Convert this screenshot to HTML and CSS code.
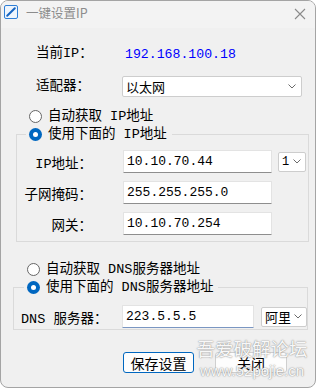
FILE: index.html
```html
<!DOCTYPE html>
<html lang="zh-CN">
<head>
<meta charset="utf-8">
<title>一键设置IP</title>
<link rel="stylesheet" href="styles.css">
</head>
<body>
<div class="window">
  <div class="titlebar">
    <svg class="app-icon" width="14" height="14" viewBox="0 0 14 14">
      <rect x="0.5" y="0.5" width="13" height="13" rx="1.5" fill="#eef5fd" stroke="#2f7fd6"/>
      <line x1="3.2" y1="10.8" x2="10.8" y2="3.2" stroke="#1665c1" stroke-width="2" stroke-linecap="round"/>
    </svg>
    <span class="title">一键设置IP</span>
    <svg class="close" width="12" height="12" viewBox="0 0 12 12">
      <path d="M1 1 L11 11 M11 1 L1 11" stroke="#8a8a8a" stroke-width="1.1" fill="none"/>
    </svg>
  </div>

  <div class="client">
    <div class="row-ip">
      <span class="lbl lbl-ip">当前IP：</span>
      <span class="ip-value">192.168.100.18</span>
    </div>

    <div class="row-adapter">
      <span class="lbl lbl-adapter">适配器：</span>
      <div class="combo combo-adapter">
        <span class="combo-text">以太网</span>
        <svg class="chev" width="8" height="5" viewBox="0 0 8 5"><path d="M0.5 0.5 L4 4 L7.5 0.5" stroke="#6b6b6b" fill="none"/></svg>
      </div>
    </div>

    <div class="radio-row radio-ip">
      <span class="radio"></span>
      <span class="rtext">自动获取 IP地址</span>
    </div>

    <fieldset class="group group-ip">
      <legend class="legend legend-ip">
        <span class="radio checked"></span>
        <span class="rtext">使用下面的 IP地址</span>
      </legend>
      <div class="frows">
        <div class="frow">
          <span class="flbl">IP地址：</span>
          <input class="tb" type="text" value="10.10.70.44">
          <div class="combo combo-small">
            <span class="combo-text mono">1</span>
            <svg class="chev" width="8" height="5" viewBox="0 0 8 5"><path d="M0.5 0.5 L4 4 L7.5 0.5" stroke="#6b6b6b" fill="none"/></svg>
          </div>
        </div>
        <div class="frow">
          <span class="flbl">子网掩码：</span>
          <input class="tb" type="text" value="255.255.255.0">
        </div>
        <div class="frow">
          <span class="flbl">网关：</span>
          <input class="tb" type="text" value="10.10.70.254">
        </div>
      </div>
    </fieldset>

    <div class="radio-row radio-dns">
      <span class="radio"></span>
      <span class="rtext">自动获取 DNS服务器地址</span>
    </div>

    <fieldset class="group group-dns">
      <legend class="legend legend-dns">
        <span class="radio checked"></span>
        <span class="rtext">使用下面的 DNS服务器地址</span>
      </legend>
      <div class="frow dns-row">
        <span class="dlbl">DNS 服务器：</span>
        <input class="tb tb-dns" type="text" value="223.5.5.5">
        <div class="combo combo-dns">
          <span class="combo-text">阿里</span>
          <svg class="chev" width="8" height="5" viewBox="0 0 8 5"><path d="M0.5 0.5 L4 4 L7.5 0.5" stroke="#6b6b6b" fill="none"/></svg>
        </div>
      </div>
    </fieldset>

    <div class="buttons">
      <button class="btn btn-primary" type="button">保存设置</button>
      <button class="btn" type="button">关闭</button>
    </div>
  </div>

  <div class="watermark">
    <div class="wm-cn">吾爱破解论坛</div>
    <div class="wm-url">www.52pojie.cn</div>
  </div>
</div>
</body>
</html>
```

FILE: styles.css
```css
* { box-sizing: border-box; }

html, body {
  margin: 0;
  padding: 0;
  background: #ffffff;
}

body {
  font-family: "Liberation Mono", "Noto Sans CJK SC", monospace;
  font-size: 13px;
  color: #000;
}

.window {
  position: relative;
  width: 316px;
  height: 388px;
  border: 1px solid #a4a4a4;
  border-radius: 8px;
  background: #f0f0f0;
  overflow: hidden;
}

.titlebar {
  height: 27px;
  background: #f3f3f3;
  display: flex;
  align-items: flex-start;
  padding: 4px 0 0 3px;
}

.app-icon { display: block; flex: none; }

.title {
  margin-left: 8px;
  font-family: "Noto Sans CJK SC", sans-serif;
  font-size: 12.5px;
  line-height: 16px;
  color: #8c8c8c;
}

.close {
  margin-left: auto;
  margin-right: 9px;
  margin-top: 3px;
  display: block;
}

.client {
  display: flex;
  flex-direction: column;
  padding-top: 16px;
}

.lbl {
  font-size: 13.5px;
  line-height: 20px;
}

.row-ip {
  display: flex;
  align-items: center;
  height: 20px;
  margin-left: 35px;
}

.lbl-ip { width: 89px; }

.ip-value {
  color: #0000ff;
  font-family: "Liberation Mono", monospace;
  font-size: 13.2px;
}

.row-adapter {
  display: flex;
  align-items: center;
  height: 21px;
  margin-top: 12px;
  margin-left: 35px;
}

.lbl-adapter { width: 86px; }

.combo {
  display: flex;
  align-items: center;
  background: #fff;
  border: 1px solid #cdcdcd;
  border-radius: 2px;
  height: 21px;
}

.combo-text {
  font-family: "Noto Sans CJK SC", sans-serif;
  font-size: 13px;
  line-height: 16px;
  padding-left: 3px;
}

.combo-text.mono {
  font-family: "Liberation Mono", monospace;
  font-size: 12px;
}

.chev {
  margin-left: auto;
  margin-right: 5px;
  display: block;
}

.combo-adapter { width: 180px; }

.radio-row {
  display: flex;
  align-items: center;
}

.radio-ip {
  height: 17px;
  margin-top: 11px;
  margin-left: 28px;
}

.radio {
  width: 13px;
  height: 13px;
  border-radius: 50%;
  border: 1px solid #666;
  background: #fff;
  flex: none;
}

.radio.checked {
  border: none;
  background: #0067c0;
  display: flex;
  align-items: center;
  justify-content: center;
}

.radio.checked::after {
  content: "";
  width: 5px;
  height: 5px;
  border-radius: 50%;
  background: #fff;
}

.rtext {
  margin-left: 6px;
  font-size: 13.5px;
  line-height: 17px;
  white-space: nowrap;
}

.group {
  margin: 0;
  padding: 0;
  border: 1px solid #dadada;
  min-width: 0;
}

.legend {
  display: flex;
  align-items: center;
  height: 18px;
  padding: 0 5px 0 3px;
}

.group-ip {
  margin-left: 15px;
  margin-right: 6px;
  padding-top: 7px;
  padding-bottom: 6px;
}

.legend-ip { margin-left: 9px; }

.frows {
  display: flex;
  flex-direction: column;
  gap: 8px;
}

.frow {
  display: flex;
  align-items: center;
  height: 23px;
}

.flbl {
  width: 75px;
  text-align: right;
  font-size: 13.5px;
  white-space: nowrap;
}

.tb {
  margin: 0 0 0 31px;
  width: 149px;
  height: 23px;
  border: 1px solid #e3e3e3;
  border-bottom-color: #8e8e8e;
  border-radius: 1px;
  background: #fff;
  padding: 0 3px;
  font-family: "Liberation Mono", monospace;
  font-size: 13px;
  color: #000;
  outline: none;
}

.combo-small {
  width: 28px;
  height: 20px;
  margin-left: 6px;
}

.combo-small .chev { margin-right: 4px; }

.radio-dns {
  height: 18px;
  margin-top: 18px;
  margin-left: 26px;
}

.group-dns {
  margin-left: 12px;
  margin-right: 7px;
  padding-top: 9px;
  padding-bottom: 1px;
}

.legend-dns { margin-left: 10px; }

.dns-row { margin-left: 7px; }

.dlbl {
  width: 101px;
  font-size: 13.5px;
  white-space: nowrap;
}

.tb-dns {
  margin-left: 0;
  width: 132px;
  border-bottom-color: #7a96c2;
}

.combo-dns {
  width: 46px;
  height: 20px;
  margin-left: 7px;
}

.combo-dns .chev { margin-right: 4px; }

.buttons {
  display: flex;
  gap: 21px;
  margin-top: 22px;
  margin-left: 122px;
}

.btn {
  height: 21px;
  width: 72px;
  padding: 0;
  background: #fdfdfd;
  border: 1px solid #cfcfcf;
  border-radius: 3px;
  font-family: "Noto Sans CJK SC", sans-serif;
  font-size: 14px;
  line-height: 18px;
  color: #000;
}

.btn-primary {
  width: 71px;
  border: 1.5px solid #0067c0;
}

.watermark {
  position: absolute;
  left: 194px;
  top: 334px;
  width: 114px;
  text-align: center;
  pointer-events: none;
  color: rgba(255, 255, 255, 0.95);
  text-shadow: 0 0 1px #8a8a8a, 0 0 2px #a8a8a8;
}

.wm-cn {
  font-family: "Noto Sans CJK SC", sans-serif;
  font-size: 18.5px;
  line-height: 26px;
}

.wm-url {
  font-family: "Liberation Sans", sans-serif;
  font-size: 15px;
  line-height: 20px;
}
```
